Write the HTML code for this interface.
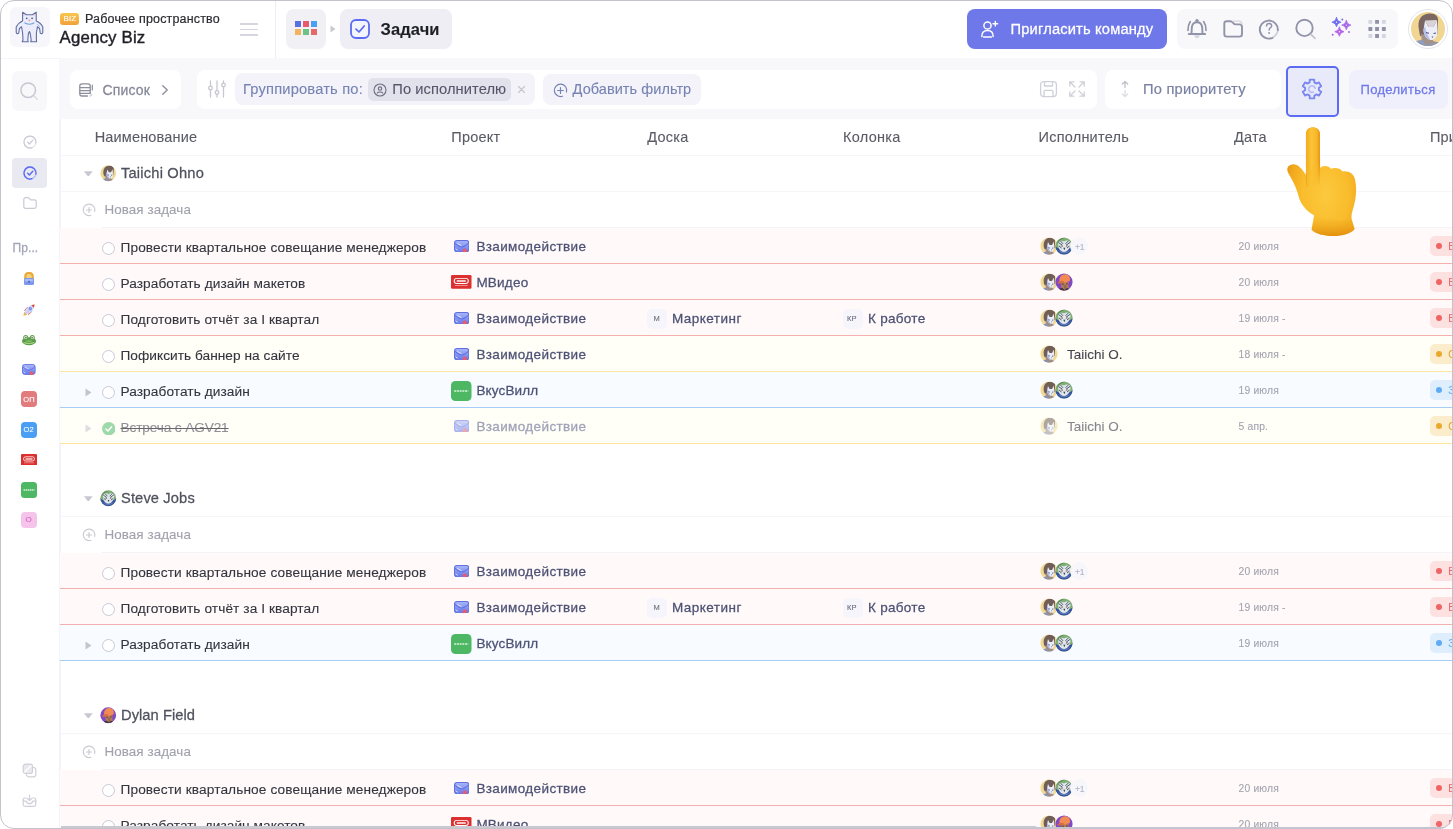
<!DOCTYPE html>
<html lang="ru">
<head>
<meta charset="utf-8">
<title>Задачи</title>
<style>
*{box-sizing:border-box;margin:0;padding:0}
html,body{width:1453px;height:829px;overflow:hidden;background:#fff}
body{font-family:"Liberation Sans",sans-serif;color:#33333d;-webkit-font-smoothing:antialiased}
#frame{will-change:transform;position:absolute;left:0;top:0;width:1453px;height:829px;border-radius:14px;overflow:hidden;background:#fff}
#frameborder{position:absolute;left:0;top:0;width:1453px;height:829px;border-radius:14px;border:1px solid #c4c3cd;pointer-events:none;z-index:100}
.abs{position:absolute}
.t{position:absolute;white-space:nowrap;line-height:1;-webkit-text-stroke:0.1px currentColor}
.med{-webkit-text-stroke:0.26px currentColor}
/* top bar */
#topbar{position:absolute;left:0;top:0;width:1453px;height:58px;background:#fff}
#content{position:absolute;left:0;top:58px;width:1453px;height:771px;background:#f8f8fb}
#sidebar{position:absolute;left:0;top:58px;width:59px;height:771px;background:#fff}
#table{position:absolute;left:59px;top:119px;width:1394px;height:710px;background:#fff;border-left:2px solid #f3f3f9}
.box{position:absolute;border-radius:8px}
</style>
</head>
<body>
<svg width="0" height="0" style="position:absolute"><defs>
<linearGradient id="eg" x1="0" x2="0" y1="0" y2="1"><stop offset="0" stop-color="#a9b7fa"/><stop offset="1" stop-color="#6679e8"/></linearGradient><g id="envl"><rect x="0.500" y="0.500" width="14" height="11" rx="2.500" fill="url(#eg)" stroke="#6070e2" stroke-width="1"/><path d="M0.800 3 C3 5 5.500 6.800 7.500 6.800 C9.500 6.800 12 5 14.200 3" fill="none" stroke="#6070e2" stroke-width="1" stroke-linejoin="round"/><path d="M3.500 3.500 L7 5.300" stroke="#e4e9ff" stroke-width="0.900" stroke-linecap="round"/><path d="M1.800 8.800 L3.300 9.800" stroke="#dfe5ff" stroke-width="0.900" stroke-linecap="round"/><circle cx="10.500" cy="10.300" r="2.100" fill="#e85a6c"/></g>
<g id="mvid"><rect width="16" height="11.500" rx="1" fill="#dc2f2f"/><rect x="2.500" y="2.800" width="11" height="4.200" rx="2.100" fill="none" stroke="#fff" stroke-width="0.800"/><path d="M4.500 5 L11.500 5" stroke="#fff" stroke-width="1.200"/><path d="M3 8.800 L13 8.800" stroke="#f3a0a0" stroke-width="0.700"/></g>
<g id="vkus"><rect width="16" height="16" rx="3.500" fill="#4db763"/><path d="M2.500 8 L13.500 8" stroke="#d5f2da" stroke-width="1.300" stroke-dasharray="1.600 0.500"/></g>
<clipPath id="c18"><circle cx="9" cy="9" r="8.600"/></clipPath>
<g id="avt"><g clip-path="url(#c18)"><rect width="18" height="18" fill="#f1d995"/>
<path d="M4 11 C2.800 5 5 1 10 0.800 C14 0.600 15.500 2.500 15 5.500 L14.500 11 L5 12.500 Z" fill="#6f5f58"/>
<path d="M5.500 11.500 L6 15 L2 17 L2 18 L16 18 L15 16 L12 15 L12 12 Z" fill="#9e8d86"/>
<path d="M1 18 L2.500 15.500 L6 14.500 L8.500 17.500 L13 16.500 L16 16 L17.500 18 Z" fill="#8494bd"/>
<path d="M8 5 L9.600 8 L12 8 L13.800 4.500 L14.200 10.500 C14.200 13.200 12.300 15 10.500 14.700 C8.300 14.200 7 12 7 9.500 Z" fill="#e9ecf7"/>
<path d="M7 9.500 C7 12 8.300 14.200 10.500 14.700 C9 12.500 8.200 10.500 7.800 7.500 Z" fill="#a9b6e6"/>
<path d="M8.400 10.700 L9.900 11.100 M12 11.200 L13.400 11" stroke="#454a6c" stroke-width="0.800" fill="none"/>
<path d="M10.800 12.600 L11.400 13.500 L11.900 12.600 Z" fill="#454a6c"/>
</g></g>
<g id="avs"><g clip-path="url(#c18)"><rect width="18" height="18" fill="#7fae74"/>
<path d="M0 9 C3 12 6 11.500 9 13.500 C12 11.500 15 12 18 9 L18 18 L0 18 Z" fill="#34519f"/>
<path d="M3.500 5.500 C4.500 3.500 7 3 9 4.500 C11 3 14 3.500 15.500 5 C16 8 14.500 12 12 14 C10 15.300 8 15.300 6 14 C3.500 12 2.800 8 3.500 5.500 Z" fill="#dfe7ea"/>
<path d="M3.500 5.500 L7.500 8.300 M15.500 5 L11 8.300 M5.500 4 L8 6.800 M13.500 3.800 L10.500 6.800 M4 9 L6.500 11 M14.500 9 L12 11" stroke="#3c4a5c" stroke-width="0.900" fill="none"/>
<path d="M5.800 8.800 L7.800 9.500 M12.800 8.600 L10.800 9.500" stroke="#8a3a3a" stroke-width="0.700"/>
<path d="M8.300 10.800 L9.300 13.200 L10.300 10.800 Z" fill="#34404f"/>
<path d="M2 6 C3 2.500 6 1 9 1 C7 2.500 4 3.500 2 6 Z" fill="#5d8a5a"/>
<path d="M4 13.500 C6 16.500 12 16.500 14.500 13.500" stroke="#6f88bd" stroke-width="1" fill="none"/>
</g></g>
<g id="avd"><g clip-path="url(#c18)"><rect width="18" height="18" fill="#8349c4"/>
<path d="M5.500 9 L6.500 15 L4 18 L15 18 L13.500 14 L13.500 8.500 Z" fill="#b17c5c"/>
<path d="M3 18 L4.500 15.500 L7.500 15 L9.500 17 L12 15 L15 16 L16 18 Z" fill="#3c3550"/>
<path d="M4.500 8.500 C4 4 6.500 1.200 10 1.200 C13.500 1.200 15.500 3.500 15 7 C14.800 8.300 14 8.800 13 8.500 L9.500 9.800 L3 10.300 C2.300 10.200 2.500 9.300 4.500 8.500 Z" fill="#f28a55"/>
<path d="M4.500 8.500 C6 7 9 7.500 9.500 9.800 L3 10.300 C2.300 10.200 2.500 9.300 4.500 8.500 Z" fill="#d96c3c"/>
<path d="M6.500 11 L9 11.300 M11 11 L13 10.800" stroke="#4a3028" stroke-width="0.700"/>
<path d="M9 12 C8.500 14 9 16 10 17 C11 16 11.500 14 11 12" fill="#8c5c44" opacity="0.700"/>
</g></g>
</defs></svg>
<div id="frame">
<div id="content"></div>
<div id="topbar">
<div class="box" style="left:10px;top:7px;width:40px;height:40px;border-radius:6px;background:#f7f7fb"></div>
<svg class="abs" style="left:10px;top:7px" width="40" height="40" viewBox="0 0 40 40">
<path d="M12.600 14 L12.600 5.200 L16.400 7.700 L22.400 7.700 L26.200 5.200 L26.200 14 C29 15 31.500 17.500 32.800 20 L32.800 25.300 C32.800 26.800 31 27 30.200 26 L29.600 21.500 L27.400 19.800 L26.400 26 L26.400 33 L26.600 34.800 L20.600 34.800 L21.200 33 L20.200 26.500 L19.400 24.500 L18.400 26.500 L17.800 33 L18.200 34.800 L12.200 34.800 L13 33 L12.600 26 L11.600 19.800 L9.400 21.500 L8.800 26 C8 27 6.200 26.800 6.200 25.300 L6.200 20 C7.500 17.500 10 15 12.600 14 Z" fill="#ececfb" stroke="#5f6ea2" stroke-width="1.100" stroke-linejoin="round"/>
<path d="M14.500 15.600 C16.500 17.800 22.300 17.800 24.300 15.600" fill="none" stroke="#6b9fdb" stroke-width="1.100"/>
<path d="M13.500 8.800 L13.500 6.800 L15.300 8.200 Z M25.300 8.800 L25.300 6.800 L23.500 8.200 Z" fill="#f5b5bd"/>
<circle cx="16.700" cy="11.300" r="0.850" fill="#4c5784"/><circle cx="22.100" cy="11.300" r="0.850" fill="#4c5784"/>
<path d="M18.200 12.800 L20.600 12.800 L19.400 14.500 Z" fill="#f0878f"/>
<path d="M27.500 17 L29.500 19.500" stroke="#8ba5e0" stroke-width="0.800"/>
</svg>
<div class="abs" style="left:60.200px;top:12.600px;width:18.700px;height:12px;border-radius:3px;background:linear-gradient(#f8c850,#f0a138)"></div>
<div class="t" style="left:63.600px;top:14.700px;font-size:8px;color:#fff;letter-spacing:0.1px">BIZ</div>
<div class="t" style="left:85px;top:13.300px;font-size:12.500px;letter-spacing:0.17px;color:#2b2b33;-webkit-text-stroke:0.2px currentColor">Рабочее пространство</div>
<div class="t" style="left:59.500px;top:29.800px;font-size:16.800px;letter-spacing:0.2px;color:#1e1e26;-webkit-text-stroke:0.4px currentColor">Agency Biz</div>
<div class="abs" style="left:240px;top:23px;width:18px;height:1.6px;background:#d6d6de"></div>
<div class="abs" style="left:240px;top:28.7px;width:18px;height:1.6px;background:#d6d6de"></div>
<div class="abs" style="left:240px;top:34.4px;width:18px;height:1.6px;background:#d6d6de"></div>
<div class="abs" style="left:275px;top:0;width:1px;height:58px;background:#ededf3"></div>
<div class="box" style="left:286px;top:9px;width:40px;height:40px;background:#f0f0f5"></div>
<div class="abs" style="left:295px;top:21px;width:6px;height:6px;background:#5b70e0"></div>
<div class="abs" style="left:303px;top:21px;width:6px;height:6px;background:#e9586c"></div>
<div class="abs" style="left:311px;top:21px;width:6px;height:6px;background:#4a9ff2"></div>
<div class="abs" style="left:295px;top:29px;width:6px;height:6px;background:#f2b35f"></div>
<div class="abs" style="left:303px;top:29px;width:6px;height:6px;background:#6cc283"></div>
<div class="abs" style="left:311px;top:29px;width:6px;height:6px;background:#e2686a"></div>
<svg class="abs" style="left:330px;top:25px" width="6" height="8" viewBox="0 0 6 8"><path d="M0.5 0.5 L5.5 4 L0.5 7.5 Z" fill="#c9c9d2"/></svg>
<div class="box" style="left:340px;top:9px;width:112px;height:40px;background:#eeeef4"></div>
<svg class="abs" style="left:349px;top:18px" width="22" height="22" viewBox="0 0 22 22"><rect x="2" y="2" width="18" height="18" rx="5" fill="#f4f4fd" stroke="#5c6bf0" stroke-width="1.8"/><path d="M7 11.2 L10 14 L15.2 8" fill="none" stroke="#5c6bf0" stroke-width="1.7" stroke-linecap="round" stroke-linejoin="round"/></svg>
<div class="t" style="left:380.5px;top:21px;font-size:16.5px;font-weight:700;letter-spacing:0.1px;color:#1e1e26">Задачи</div>
<div class="box" style="left:967px;top:9px;width:200px;height:40px;background:#6e78e8"></div>
<svg class="abs" style="left:980px;top:19px" width="20" height="20" viewBox="0 0 20 20" fill="none" stroke="#fff" stroke-width="1.5" stroke-linecap="round"><circle cx="7.5" cy="6.5" r="3.6"/><path d="M1.8 17.5 C1.8 13.5 4 11.6 7.5 11.6 C11 11.6 13.2 13.5 13.2 17.5 M3.5 18 L11.5 18"/><path d="M15.3 2.5 L15.3 7.1 M13 4.8 L17.6 4.8" stroke-width="1.4"/></svg>
<div class="t med" style="left:1010.5px;top:21.600px;font-size:14.700px;letter-spacing:0.17px;color:#fff">Пригласить команду</div>
<div class="box" style="left:1177px;top:9px;width:221px;height:40px;background:#f8f8fb"></div>
<svg class="abs" style="left:1177px;top:9px" width="221" height="40" viewBox="1177 9 221 40" fill="none" stroke="#9194a9" stroke-width="1.9" stroke-linecap="round" stroke-linejoin="round">
<path d="M1188.800 34 L1205.200 34 M1191.400 33.800 C1191.800 31 1191.600 29 1191.900 27 C1192.300 23.800 1194.300 22.200 1197 22.200 C1199.700 22.200 1201.700 23.800 1202.100 27 C1202.400 29 1202.200 31 1202.600 33.800"/>
<circle cx="1197" cy="20.600" r="1.700" fill="#9194a9" stroke="none"/>
<path d="M1194.200 35.300 C1194.800 39.300 1199.200 39.300 1199.800 35.300 Z" fill="#d3d5e0" stroke="none"/>
<path d="M1190.300 21.600 C1188.600 24 1188 27 1188 30.300 M1203.700 21.600 C1205.400 24 1206 27 1206 30.300" stroke-width="1.700"/>
<path d="M1224.300 23.500 C1224.300 22 1225.300 21.200 1226.800 21.200 L1230.500 21.200 C1231.500 21.200 1232 21.600 1232.700 22.400 L1233.700 23.600 C1234.200 24.200 1234.800 24.400 1235.600 24.400 L1239.500 24.400 C1241.200 24.400 1242 25.300 1242 27 L1242 34 C1242 35.700 1241.200 36.600 1239.500 36.600 L1226.800 36.600 C1225.200 36.600 1224.300 35.700 1224.300 34 Z"/>
<path d="M1233 21.200 L1239 21.200 C1240.800 21.200 1241.800 22.200 1242 24" stroke="#d5d6de" stroke-width="1.2"/>
<path d="M1272.500 37.800 A9 9 0 1 1 1277.800 30.500"/>
<path d="M1277.500 31.800 A9 9 0 0 1 1273.800 36.900" stroke="#d0d1da"/>
<path d="M1266.500 26 C1266.500 24.300 1267.600 23.400 1269.100 23.400 C1270.600 23.400 1271.700 24.300 1271.700 25.700 C1271.700 27.700 1269.100 27.700 1269.100 30" stroke-width="1.5"/>
<circle cx="1269.100" cy="33" r="0.95" fill="#9194a9" stroke="none"/>
<circle cx="1304.500" cy="27.900" r="8.200"/>
<path d="M1311 34.500 L1315 38.300" stroke="#c5c6d0" stroke-width="1.8"/>
<g fill="#8f92a7" stroke="none"><rect x="1375.1" y="19.9" width="3.900" height="3.900" rx="0.400"/><rect x="1368.4" y="27.0" width="3.900" height="3.900" rx="0.400"/><rect x="1375.1" y="27.0" width="3.900" height="3.900" rx="0.400"/><rect x="1381.9" y="27.0" width="3.900" height="3.900" rx="0.400"/><rect x="1375.1" y="34.0" width="3.900" height="3.900" rx="0.400"/></g><g fill="#d3d5e0" stroke="none"><rect x="1368.4" y="19.9" width="3.900" height="3.900" rx="0.400"/><rect x="1381.9" y="19.9" width="3.900" height="3.900" rx="0.400"/><rect x="1368.4" y="34.0" width="3.900" height="3.900" rx="0.400"/><rect x="1381.9" y="34.0" width="3.900" height="3.900" rx="0.400"/></g>
<g stroke="none"><path d="M1336.5 17.6 Q1337.05 21.65 1341.1 22.2 Q1337.05 22.75 1336.5 26.799999999999997 Q1335.95 22.75 1331.9 22.2 Q1335.95 21.65 1336.5 17.6 Z" fill="#6d69ee" stroke="#6d69ee" stroke-width="0.8" stroke-linejoin="round"/><circle cx="1336.5" cy="22.2" r="0.7" fill="#f8f8fb"/><path d="M1346.3 20.5 Q1346.85 24.55 1350.8999999999999 25.1 Q1346.85 25.650000000000002 1346.3 29.700000000000003 Q1345.75 25.650000000000002 1341.7 25.1 Q1345.75 24.55 1346.3 20.5 Z" fill="#a361e9" stroke="#a361e9" stroke-width="0.8" stroke-linejoin="round"/><circle cx="1346.3" cy="25.1" r="0.7" fill="#f8f8fb"/><path d="M1339.4 27.1 Q1339.95 31.15 1344.0 31.7 Q1339.95 32.25 1339.4 36.3 Q1338.8500000000001 32.25 1334.8000000000002 31.7 Q1338.8500000000001 31.15 1339.4 27.1 Z" fill="#b460e8" stroke="#b460e8" stroke-width="0.8" stroke-linejoin="round"/><circle cx="1339.4" cy="31.7" r="0.7" fill="#f8f8fb"/><circle cx="1342.300" cy="19.400" r="1" fill="#6d69ee"/><circle cx="1349" cy="31.900" r="1" fill="#b460e8"/><circle cx="1332.700" cy="34.800" r="1" fill="#a860e8"/></g>
</svg>
<div class="abs" style="left:1408px;top:9px;width:40px;height:40px;border-radius:50%;border:1px solid #e3e3ef;background:#fff"></div>
<svg class="abs" style="left:1411px;top:12px" width="34" height="34" viewBox="0 0 34 34">
<defs><clipPath id="avc"><circle cx="17" cy="17" r="17"/></clipPath></defs>
<g clip-path="url(#avc)"><rect width="34" height="34" fill="#f1d692"/>
<path d="M8 18 C6 8 10 2 18 1.5 C24 1 28 4 27 10 L26.5 22 L9 24 Z" fill="#7a6763"/>
<path d="M10 22 L11 30 L4 33 L4 34 L30 34 L30 31 L22 29 L22 24 Z" fill="#a49189"/>
<path d="M2 34 L4 29.5 L11 27.5 L15 33 L24 31 L30 30 L33 34 Z" fill="#8e9cbd"/>
<path d="M14 8.5 L17.5 15 L22.5 15 L26 8 L26.5 20 C26.5 25 23 28.5 19.5 28 C15.5 27 12.5 23 12.5 18 Z" fill="#eceef8"/>
<path d="M14 8.5 L26 8 L22.5 15 L17.5 15 Z" fill="#d9d3d8"/>
<path d="M12.500 18 C12.500 23 15.500 27 19.500 28 C17 24 15 20 14 14 Z" fill="#b5c0ea"/>
<path d="M15 20.500 L18 21.300 M22.500 21.500 L25 21" stroke="#4a4f70" stroke-width="1" fill="none"/>
<path d="M20.500 24.500 L21.500 26 L22.300 24.500 Z" fill="#4a4f70"/>
</g></svg>
</div>
<div id="toolbar">
<div class="box" style="left:70px;top:70px;width:111px;height:39px;background:#fff"></div>
<svg class="abs" style="left:78px;top:82px" width="16" height="16" viewBox="0 0 16 16" fill="none" stroke="#8d8f9f" stroke-width="1.3" stroke-linecap="round" stroke-linejoin="round"><path d="M9.500 14 L4 14 C2.600 14 1.800 13.200 1.800 11.800 L1.800 4 C1.800 2.600 2.600 1.800 4 1.800 L10 1.800 C11.400 1.800 12.200 2.600 12.200 4 L12.200 11.500"/><path d="M1.800 5.600 L12.200 5.600 M1.800 8.600 L12.200 8.600 M1.800 11.400 L12.200 11.400" stroke-width="1.100"/><path d="M14.300 3 L14.300 8" stroke-width="1.200"/><path d="M13.800 12.500 C13.500 13.500 12.800 14 11.800 14" stroke="#cfd0d9"/></svg>
<div class="t med" style="left:102.500px;top:82.700px;font-size:14px;letter-spacing:0.16px;color:#878899">Список</div>
<svg class="abs" style="left:161px;top:84px" width="8" height="12" viewBox="0 0 8 12" fill="none" stroke="#8d8f9f" stroke-width="1.400" stroke-linecap="round" stroke-linejoin="round"><path d="M1.800 1.800 L6.200 6 L1.800 10.200"/></svg>
<div class="box" style="left:197px;top:70px;width:900px;height:39px;background:#fff"></div>
<svg class="abs" style="left:207px;top:80px" width="20" height="18" viewBox="0 0 20 18" fill="none" stroke="#c6c7d1" stroke-width="1.300" stroke-linecap="round"><path d="M3.500 1 L3.500 6 M3.500 10 L3.500 17 M10 1 L10 10.500 M10 14.500 L10 17 M16.500 1 L16.500 3 M16.500 7 L16.500 17"/><circle cx="3.500" cy="8" r="1.800"/><circle cx="10" cy="12.500" r="1.800"/><circle cx="16.500" cy="5" r="1.800"/></svg>
<div class="box" style="left:235px;top:73px;width:300px;height:32px;background:#f3f3f9"></div>
<div class="t" style="left:243px;top:81.600px;font-size:14.700px;letter-spacing:0.18px;color:#7683b3">Группировать по:</div>
<div class="box" style="left:368px;top:77.500px;width:143px;height:23.500px;border-radius:5px;background:#e2e2ec"></div>
<svg class="abs" style="left:372.500px;top:82.500px" width="14" height="14" viewBox="0 0 14 14" fill="none" stroke="#6d6f82" stroke-width="1.100" stroke-linecap="round"><circle cx="7" cy="7" r="6"/><circle cx="7" cy="5.600" r="1.700"/><path d="M4.300 10 C5 8.700 9 8.700 9.700 10"/></svg>
<div class="t" style="left:392.300px;top:81.600px;font-size:14.700px;letter-spacing:0.07px;color:#55566a">По исполнителю</div>
<svg class="abs" style="left:517px;top:85px" width="9" height="9" viewBox="0 0 9 9" stroke="#c3c4ce" stroke-width="1.100" stroke-linecap="round"><path d="M1.500 1.500 L7.500 7.500 M7.500 1.500 L1.500 7.500"/></svg>
<div class="box" style="left:543px;top:73.500px;width:158px;height:31.500px;background:#f3f3f9"></div>
<svg class="abs" style="left:553px;top:82.500px" width="15" height="15" viewBox="0 0 15 15" fill="none" stroke="#7683b3" stroke-width="1.200" stroke-linecap="round"><path d="M9.500 13.200 A6.200 6.200 0 1 1 13.500 9"/><path d="M7.500 4.600 L7.500 10.400 M4.600 7.500 L10.400 7.500"/></svg>
<div class="t" style="left:572.600px;top:81.700px;font-size:14.500px;letter-spacing:0.06px;color:#7683b3">Добавить фильтр</div>
<svg class="abs" style="left:1039px;top:80px" width="19" height="18" viewBox="0 0 19 18" fill="none" stroke="#cfd0d9" stroke-width="1.300" stroke-linejoin="round"><rect x="1.600" y="1.600" width="15.800" height="15" rx="3"/><path d="M5.500 1.600 L5.500 6 L13.500 6 L13.500 1.600 M5 16.600 L5 11.500 C5 10.800 5.400 10.400 6.100 10.400 L12.900 10.400 C13.600 10.400 14 10.800 14 11.500 L14 16.600"/></svg>
<svg class="abs" style="left:1068px;top:80px" width="18" height="18" viewBox="0 0 18 18" fill="none" stroke="#cfd0d9" stroke-width="1.300" stroke-linecap="round" stroke-linejoin="round"><path d="M1.800 6 L1.800 1.800 L6 1.800 M1.800 1.800 L7 7 M12 1.800 L16.200 1.800 L16.200 6 M16.200 1.800 L11 7 M1.800 12 L1.800 16.200 L6 16.200 M1.800 16.200 L7 11 M12 16.200 L16.200 16.200 L16.200 12 M16.200 16.200 L11 11"/></svg>
<div class="box" style="left:1105px;top:70px;width:176px;height:39px;background:#fff"></div>
<svg class="abs" style="left:1119px;top:80px" width="12" height="18" viewBox="0 0 12 18" fill="none" stroke-width="1.300" stroke-linecap="round" stroke-linejoin="round"><path d="M6 7.500 L6 1.500 M3.300 4 L6 1.500 L8.700 4" stroke="#bfc0cb"/><path d="M6 10.500 L6 16.500 M3.300 14 L6 16.500 L8.700 14" stroke="#dcdde4"/></svg>
<div class="t" style="left:1143px;top:81.600px;font-size:14.700px;letter-spacing:0.2px;color:#7a80a3;-webkit-text-stroke:0.18px currentColor">По приоритету</div>
<div class="abs" style="left:1286px;top:66px;width:53px;height:51px;border:2px solid #5c6cf2;border-radius:5px;background:#e8eafa"></div>
<svg class="abs" style="left:1300.400px;top:77.100px" width="24" height="24" viewBox="0 0 24 24" fill="none" stroke="#7b87f1" stroke-width="1.900" stroke-linejoin="round" stroke-linecap="round"><path d="M14.39 5.42 L14.24 2.67 L9.76 2.67 L9.61 5.42 L7.50 6.64 L5.04 5.39 L2.80 9.27 L5.11 10.78 L5.11 13.22 L2.80 14.73 L5.04 18.61 L7.50 17.36 L9.61 18.58 L9.76 21.33 L14.24 21.33 L14.39 18.58 L16.50 17.36 L18.96 18.61 L21.20 14.73 L18.89 13.22 L18.89 10.78 L21.20 9.27 L18.96 5.39 L16.50 6.64 Z"/><path d="M13.5 15 A3.300 3.300 0 1 1 15.200 11.300" stroke="#b3baf6" stroke-width="1.600"/></svg>
<div class="box" style="left:1348.500px;top:69.500px;width:99.500px;height:39.500px;background:#f0f0fd"></div>
<div class="t med" style="left:1360.500px;top:83px;font-size:13px;letter-spacing:0.32px;color:#6e79e8">Поделиться</div>
</div>
<div id="sidebar">
<div class="abs" style="left:0;top:-0.500px;width:60px;height:1.600px;background:#f4f4f9"></div><div class="box" style="left:12px;top:13px;width:35px;height:40px;border-radius:6px;background:#f8f8fb"></div>
<svg class="abs" style="left:19px;top:22px" width="22" height="22" viewBox="0 0 22 22" fill="none" stroke-linecap="round"><circle cx="9.200" cy="10.200" r="7.300" stroke="#c6c7d1" stroke-width="1.500"/><path d="M15 16 L18.300 19.300" stroke="#dcdde5" stroke-width="1.600"/></svg>
<svg class="abs" style="left:21.500px;top:76.400px" width="16" height="16" viewBox="0 0 16 16" fill="none" stroke="#c9cad4" stroke-width="1.200" stroke-linecap="round" stroke-linejoin="round"><circle cx="8" cy="8" r="6" stroke="#e6e7ed"/><path d="M10 13.700 A6 6 0 1 1 13.900 9"/><path d="M5.600 8.200 L7.400 10 L10.800 6.200"/></svg>
<div class="abs" style="left:12px;top:99.600px;width:35px;height:30.200px;border-radius:4px;background:#e9e9f1"></div>
<svg class="abs" style="left:21.500px;top:106.700px" width="16" height="16" viewBox="0 0 16 16" fill="none" stroke="#5c6bf0" stroke-width="1.400" stroke-linecap="round" stroke-linejoin="round"><circle cx="8" cy="8" r="6" stroke="#b9c0f6"/><path d="M10 13.700 A6 6 0 1 1 13.900 9"/><path d="M5.600 8.200 L7.400 10 L10.800 6.200"/></svg>
<svg class="abs" style="left:21.500px;top:137.500px" width="16" height="14" viewBox="0 0 16 14" fill="none" stroke="#c9cad4" stroke-width="1.200" stroke-linejoin="round"><path d="M1.800 3.500 C1.800 2.300 2.500 1.700 3.600 1.700 L6 1.700 C6.700 1.700 7.100 2 7.500 2.500 L8.200 3.300 C8.500 3.700 8.900 3.900 9.500 3.900 L12.400 3.900 C13.600 3.900 14.200 4.500 14.200 5.700 L14.200 10.500 C14.200 11.700 13.600 12.300 12.400 12.300 L3.600 12.300 C2.400 12.300 1.800 11.700 1.800 10.500 Z"/></svg>
<div class="t med" style="left:12.500px;top:183.500px;font-size:12px;letter-spacing:0.1px;color:#a3a5b8">Пр...</div>
<!-- lock -->
<svg class="abs" style="left:22px;top:214px" width="14" height="14" viewBox="0 0 14 14"><path d="M3.300 7 L3.300 4.500 C3.300 2.300 4.800 1 7 1 C9.200 1 10.700 2.300 10.700 4.500 L10.700 7" fill="#f6d27a" stroke="#e8a93a" stroke-width="2.200"/><rect x="2" y="6" width="10" height="7" rx="1.500" fill="#7d97ee"/><rect x="3" y="7" width="8" height="2.500" rx="1" fill="#a9bdf7"/><circle cx="7" cy="9.800" r="1" fill="#4a60c0"/></svg>
<!-- rocket -->
<svg class="abs" style="left:22px;top:244.500px" width="14" height="14" viewBox="0 0 14 14"><path d="M1.300 12.700 L2.300 8.800 L5.200 11.700 Z" fill="#f2b13c"/><path d="M1.800 7.800 L5.500 3.800 L7 7 Z M6.200 12.200 L10.200 8.500 L7 7 Z" fill="#e0483c"/><path d="M3.200 10.800 C2 7 5.500 2 12.500 1.500 C12 8.500 7 12 3.200 10.800 Z" fill="#d3d9f8"/><path d="M9.300 2.200 C10.500 1.700 11.500 1.500 12.500 1.500 C12.500 2.500 12.300 3.500 11.800 4.700 Z" fill="#e0483c"/><circle cx="8.300" cy="5.700" r="1.700" fill="#6f86e8"/><path d="M3.200 10.800 C5 10 8 7 9.500 4" stroke="#aab4ee" stroke-width="0.700" fill="none"/></svg>
<!-- frog -->
<svg class="abs" style="left:21px;top:275.500px" width="16" height="12" viewBox="0 0 16 12"><ellipse cx="8" cy="7.200" rx="7" ry="4" fill="#5aa046"/><circle cx="4.700" cy="3.500" r="2.500" fill="#5aa046"/><circle cx="11.300" cy="3.500" r="2.500" fill="#5aa046"/><circle cx="4.700" cy="3.500" r="1.500" fill="#f2f4ee"/><circle cx="11.300" cy="3.500" r="1.500" fill="#f2f4ee"/><circle cx="4.900" cy="3.700" r="0.700" fill="#333"/><circle cx="11.100" cy="3.700" r="0.700" fill="#333"/><ellipse cx="8" cy="8.200" rx="5.500" ry="1.800" fill="#9ed27c"/><path d="M3 7.300 C5 8.500 11 8.500 13 7.300" stroke="#2f6a2a" stroke-width="0.700" fill="none"/></svg>
<!-- envelope -->
<svg class="abs" style="left:22px;top:305.800px" width="13.600" height="11.400" viewBox="0 0 15 12.600"><use href="#envl"/></svg>
<div class="abs" style="left:20.600px;top:333.200px;width:16px;height:16px;border-radius:4px;background:#e27c7c"></div>
<div class="t" style="left:23.200px;top:337.700px;font-size:7.500px;color:#fff;letter-spacing:0.2px">ОП</div>
<div class="abs" style="left:20.600px;top:363.500px;width:16px;height:16px;border-radius:4px;background:#4a9ff5"></div>
<div class="t" style="left:23.400px;top:368px;font-size:7.500px;color:#fff;letter-spacing:0.2px">О2</div>
<svg class="abs" style="left:20.600px;top:395.700px" width="16" height="11.500" viewBox="0 0 16 11.500"><use href="#mvid"/></svg>
<svg class="abs" style="left:20.600px;top:423.800px" width="16" height="16" viewBox="0 0 16 16"><use href="#vkus"/></svg>
<div class="abs" style="left:20.600px;top:453.700px;width:16px;height:16px;border-radius:4px;background:#f6c3ea"></div>
<div class="t" style="left:25.600px;top:458px;font-size:8px;color:#d263c3">О</div>
<svg class="abs" style="left:22px;top:705px" width="15" height="15" viewBox="0 0 15 15" fill="none" stroke="#cfd0d9" stroke-width="1.200" stroke-linejoin="round"><rect x="4.500" y="4.500" width="9.300" height="9.300" rx="2.200"/><rect x="1.200" y="1.200" width="9.300" height="9.300" rx="2.200" fill="#e9e9ef"/><path d="M2.500 9.300 L9.300 2.500" stroke="#fff" stroke-width="1.300"/></svg>
<svg class="abs" style="left:22px;top:736px" width="15" height="14" viewBox="0 0 15 14" fill="none" stroke="#cfd0d9" stroke-width="1.200" stroke-linejoin="round" stroke-linecap="round"><path d="M4.200 4 L3 4 C1.800 4 1.200 4.600 1.200 5.800 L1.200 10.500 C1.200 11.700 1.800 12.300 3 12.300 L12 12.300 C13.200 12.300 13.800 11.700 13.800 10.500 L13.800 5.800 C13.800 4.600 13.200 4 12 4 L10.800 4"/><path d="M1.200 7.200 L4.300 7.200 C4.800 8.800 5.800 9.600 7.500 9.600 C9.200 9.600 10.200 8.800 10.700 7.200 L13.800 7.200"/><path d="M7.500 1 L7.500 6.500 M5.300 4.500 L7.500 6.700 L9.700 4.500"/></svg>
</div>
<div id="table"></div>
<div id="rows">
<div class="t " style="left:94.7px;top:127.1px;height:20px;line-height:20px;font-size:14.5px;letter-spacing:0.15999999999999998px;color:#5a5b65;">Наименование</div><div class="t " style="left:451.3px;top:127.1px;height:20px;line-height:20px;font-size:14.5px;letter-spacing:0.23000000000000004px;color:#5a5b65;">Проект</div><div class="t " style="left:647.3px;top:127.1px;height:20px;line-height:20px;font-size:14.5px;letter-spacing:0.22000000000000003px;color:#5a5b65;">Доска</div><div class="t " style="left:843px;top:127.1px;height:20px;line-height:20px;font-size:14.5px;letter-spacing:0.27999999999999997px;color:#5a5b65;">Колонка</div><div class="t " style="left:1038.5px;top:127.1px;height:20px;line-height:20px;font-size:14.5px;letter-spacing:0.23000000000000004px;color:#5a5b65;">Исполнитель</div><div class="t " style="left:1234px;top:127.1px;height:20px;line-height:20px;font-size:14.5px;letter-spacing:0.16999999999999998px;color:#5a5b65;">Дата</div><div class="t " style="left:1430px;top:127.1px;height:20px;line-height:20px;font-size:14.5px;letter-spacing:0.16999999999999998px;color:#5a5b65;">Приоритет</div><div class="abs" style="left:60px;top:155px;width:1393px;height:1px;background:#f6f6fa"></div><svg class="abs" style="left:84px;top:170.7px" width="8.600" height="5.800" viewBox="0 0 8.600 5.800"><path d="M0.400 0.400 L8.200 0.400 L4.300 5.500 Z" fill="#c6c7d0" stroke="#c6c7d0" stroke-width="0.500" stroke-linejoin="round"/></svg><svg class="abs" style="left:100px;top:165px;opacity:1" width="16.5" height="16.5" viewBox="0 0 18 18"><use href="#avt"/></svg><div class="t med" style="left:121px;top:163.4px;height:20px;line-height:20px;font-size:14.7px;letter-spacing:0.18px;color:#50515e;">Taiichi Ohno</div><div class="abs" style="left:60px;top:191px;width:1393px;height:1px;background:#f6f6fa"></div><svg class="abs" style="left:82.300px;top:202.9px" width="14" height="14" viewBox="0 0 15 15" fill="none" stroke="#c9cad4" stroke-width="1.250" stroke-linecap="round"><path d="M9.500 13.200 A6.200 6.200 0 1 1 13.500 9"/><path d="M7.500 4.800 L7.500 10.200 M4.800 7.500 L10.200 7.500"/></svg><div class="t " style="left:104.5px;top:200.1px;height:20px;line-height:20px;font-size:13.4px;letter-spacing:0.08px;color:#a0a1ac;">Новая задача</div><div class="abs" style="left:102px;top:227px;width:1351px;height:1px;background:#f4f4f8"></div><div class="abs" style="left:60px;top:228px;width:1393px;height:36px;background:#fffaf9"></div><div class="abs" style="left:60px;top:263.1px;width:1393px;height:1.2px;background:#f5b0b0;z-index:2"></div><div class="abs" style="left:101.700px;top:241.7px;width:13px;height:13px;border-radius:50%;border:1.400px solid #c9cad7;background:#fff"></div><div class="t " style="left:120.5px;top:238.2px;height:20px;line-height:20px;font-size:13.7px;letter-spacing:0.1px;color:#33343e;">Провести квартальное совещание менеджеров</div><svg class="abs" style="left:453.800px;top:239.6px;" width="15.400" height="12.900" viewBox="0 0 15 12.600"><use href="#envl"/></svg><div class="t med" style="left:476.4px;top:236.7px;height:20px;line-height:20px;font-size:13.5px;letter-spacing:0.37px;color:#4d5275;">Взаимодействие</div><svg class="abs" style="left:1040px;top:237px;opacity:1" width="18" height="18" viewBox="0 0 18 18"><use href="#avt"/></svg><svg class="abs" style="left:1055px;top:237px;opacity:1" width="18" height="18" viewBox="0 0 18 18"><use href="#avs"/></svg><div class="abs" style="left:1070.400px;top:237px;width:18px;height:18px;border-radius:50%;background:#f6f6fb"></div><div class="t " style="left:1075px;top:236.7px;height:20px;line-height:20px;font-size:8.5px;letter-spacing:-0.3px;color:#b0b2c4;">+1</div><div class="t " style="left:1238.5px;top:236.9px;height:20px;line-height:20px;font-size:10.3px;letter-spacing:0.2px;color:#a3a4af;">20 июля</div><div class="abs" style="left:1429.600px;top:236.4px;width:60px;height:19.300px;border-radius:5px;background:#fde1e0"></div><div class="abs" style="left:1436px;top:243.1px;width:6px;height:6px;border-radius:50%;background:#ef6464"></div><div class="t " style="left:1448.2px;top:236.7px;height:20px;line-height:20px;font-size:10px;letter-spacing:0px;color:#ec6a6a;">В</div><div class="abs" style="left:60px;top:264px;width:1393px;height:36px;background:#fffaf9"></div><div class="abs" style="left:60px;top:299.1px;width:1393px;height:1.2px;background:#f5b0b0;z-index:2"></div><div class="abs" style="left:101.700px;top:277.7px;width:13px;height:13px;border-radius:50%;border:1.400px solid #c9cad7;background:#fff"></div><div class="t " style="left:120.5px;top:274.2px;height:20px;line-height:20px;font-size:13.7px;letter-spacing:0.06px;color:#33343e;">Разработать дизайн макетов</div><svg class="abs" style="left:451.400px;top:275.4px" width="20.500" height="13.800" viewBox="0 0 16 11.500" preserveAspectRatio="none"><use href="#mvid"/></svg><div class="t med" style="left:476.4px;top:272.7px;height:20px;line-height:20px;font-size:13.5px;letter-spacing:0.22px;color:#4d5275;">МВидео</div><svg class="abs" style="left:1040px;top:273px;opacity:1" width="18" height="18" viewBox="0 0 18 18"><use href="#avt"/></svg><svg class="abs" style="left:1055px;top:273px;opacity:1" width="18" height="18" viewBox="0 0 18 18"><use href="#avd"/></svg><div class="t " style="left:1238.5px;top:272.9px;height:20px;line-height:20px;font-size:10.3px;letter-spacing:0.2px;color:#a3a4af;">20 июля</div><div class="abs" style="left:1429.600px;top:272.4px;width:60px;height:19.300px;border-radius:5px;background:#fde1e0"></div><div class="abs" style="left:1436px;top:279.1px;width:6px;height:6px;border-radius:50%;background:#ef6464"></div><div class="t " style="left:1448.2px;top:272.7px;height:20px;line-height:20px;font-size:10px;letter-spacing:0px;color:#ec6a6a;">В</div><div class="abs" style="left:60px;top:300px;width:1393px;height:36px;background:#fffaf9"></div><div class="abs" style="left:60px;top:335.1px;width:1393px;height:1.2px;background:#f5b0b0;z-index:2"></div><div class="abs" style="left:101.700px;top:313.7px;width:13px;height:13px;border-radius:50%;border:1.400px solid #c9cad7;background:#fff"></div><div class="t " style="left:120.5px;top:310.2px;height:20px;line-height:20px;font-size:13.7px;letter-spacing:0.07999999999999999px;color:#33343e;">Подготовить отчёт за I квартал</div><svg class="abs" style="left:453.800px;top:311.6px;" width="15.400" height="12.900" viewBox="0 0 15 12.600"><use href="#envl"/></svg><div class="t med" style="left:476.4px;top:308.7px;height:20px;line-height:20px;font-size:13.5px;letter-spacing:0.37px;color:#4d5275;">Взаимодействие</div><div class="abs" style="left:647.3px;top:308.5px;width:20px;height:20px;border-radius:5px;background:#f5f5fb"></div><div class="t " style="left:653.5999999999999px;top:309.0px;height:20px;line-height:20px;font-size:7.5px;letter-spacing:0.2px;color:#6c6e80;">М</div><div class="t med" style="left:671.9px;top:308.7px;height:20px;line-height:20px;font-size:13.5px;letter-spacing:0.48px;color:#4d5275;">Маркетинг</div><div class="abs" style="left:843.3px;top:308.5px;width:20px;height:20px;border-radius:5px;background:#f5f5fb"></div><div class="t " style="left:846.8999999999999px;top:309.0px;height:20px;line-height:20px;font-size:7.5px;letter-spacing:0.2px;color:#6c6e80;">КР</div><div class="t med" style="left:867.9px;top:308.7px;height:20px;line-height:20px;font-size:13.5px;letter-spacing:0.31px;color:#4d5275;">К работе</div><svg class="abs" style="left:1040px;top:309px;opacity:1" width="18" height="18" viewBox="0 0 18 18"><use href="#avt"/></svg><svg class="abs" style="left:1055px;top:309px;opacity:1" width="18" height="18" viewBox="0 0 18 18"><use href="#avs"/></svg><div class="t " style="left:1238.5px;top:308.9px;height:20px;line-height:20px;font-size:10.3px;letter-spacing:0.2px;color:#a3a4af;">19 июля -</div><div class="abs" style="left:1429.600px;top:308.4px;width:60px;height:19.300px;border-radius:5px;background:#fde1e0"></div><div class="abs" style="left:1436px;top:315.1px;width:6px;height:6px;border-radius:50%;background:#ef6464"></div><div class="t " style="left:1448.2px;top:308.7px;height:20px;line-height:20px;font-size:10px;letter-spacing:0px;color:#ec6a6a;">В</div><div class="abs" style="left:60px;top:336px;width:1393px;height:36px;background:#fffef7"></div><div class="abs" style="left:60px;top:371.1px;width:1393px;height:1.2px;background:#fce6a0;z-index:2"></div><div class="abs" style="left:101.700px;top:349.7px;width:13px;height:13px;border-radius:50%;border:1.400px solid #c9cad7;background:#fff"></div><div class="t " style="left:120.5px;top:346.2px;height:20px;line-height:20px;font-size:13.7px;letter-spacing:0.03px;color:#33343e;">Пофиксить баннер на сайте</div><svg class="abs" style="left:453.800px;top:347.6px;" width="15.400" height="12.900" viewBox="0 0 15 12.600"><use href="#envl"/></svg><div class="t med" style="left:476.4px;top:344.7px;height:20px;line-height:20px;font-size:13.5px;letter-spacing:0.37px;color:#4d5275;">Взаимодействие</div><svg class="abs" style="left:1040px;top:345px;opacity:1" width="18" height="18" viewBox="0 0 18 18"><use href="#avt"/></svg><div class="t " style="left:1067px;top:345.1px;height:20px;line-height:20px;font-size:13.5px;letter-spacing:0px;color:#44454f;">Taiichi O.</div><div class="t " style="left:1238.5px;top:344.9px;height:20px;line-height:20px;font-size:10.3px;letter-spacing:0.2px;color:#a3a4af;">18 июля -</div><div class="abs" style="left:1429.600px;top:344.4px;width:60px;height:19.300px;border-radius:5px;background:#fbedcc"></div><div class="abs" style="left:1436px;top:351.1px;width:6px;height:6px;border-radius:50%;background:#e9a92d"></div><div class="t " style="left:1448.2px;top:344.7px;height:20px;line-height:20px;font-size:10px;letter-spacing:0px;color:#e0a535;">С</div><div class="abs" style="left:60px;top:372px;width:1393px;height:36px;background:#f8fbff"></div><div class="abs" style="left:60px;top:406.8px;width:1393px;height:1.6px;background:#a6cdf8;z-index:2"></div><svg class="abs" style="left:85px;top:388px" width="7" height="9" viewBox="0 0 7 9"><path d="M0.500 0.500 L6.500 4.500 L0.500 8.500 Z" fill="#c4c5cf"/></svg><div class="abs" style="left:101.700px;top:385.7px;width:13px;height:13px;border-radius:50%;border:1.400px solid #c9cad7;background:#fff"></div><div class="t " style="left:120.5px;top:382.2px;height:20px;line-height:20px;font-size:13.7px;letter-spacing:0.07px;color:#33343e;">Разработать дизайн</div><svg class="abs" style="left:451.400px;top:380.8px" width="20.500" height="20" viewBox="0 0 16 16" preserveAspectRatio="none"><use href="#vkus"/></svg><div class="t med" style="left:476.4px;top:380.7px;height:20px;line-height:20px;font-size:13.5px;letter-spacing:0.16px;color:#4d5275;">ВкусВилл</div><svg class="abs" style="left:1040px;top:381px;opacity:1" width="18" height="18" viewBox="0 0 18 18"><use href="#avt"/></svg><svg class="abs" style="left:1055px;top:381px;opacity:1" width="18" height="18" viewBox="0 0 18 18"><use href="#avs"/></svg><div class="t " style="left:1238.5px;top:380.9px;height:20px;line-height:20px;font-size:10.3px;letter-spacing:0.2px;color:#a3a4af;">19 июля</div><div class="abs" style="left:1429.600px;top:380.4px;width:60px;height:19.300px;border-radius:5px;background:#deeefd"></div><div class="abs" style="left:1436px;top:387.1px;width:6px;height:6px;border-radius:50%;background:#5eacf5"></div><div class="t " style="left:1448.2px;top:380.7px;height:20px;line-height:20px;font-size:10px;letter-spacing:0px;color:#62aef2;">З</div><div class="abs" style="left:60px;top:408px;width:1393px;height:36px;background:#fffef7"></div><div class="abs" style="left:60px;top:443.1px;width:1393px;height:1.2px;background:#fce6a0;z-index:2"></div><svg class="abs" style="left:85px;top:424px" width="7" height="9" viewBox="0 0 7 9"><path d="M0.500 0.500 L6.500 4.500 L0.500 8.500 Z" fill="#dddde4"/></svg><svg class="abs" style="left:101.500px;top:421.5px" width="13.500" height="13.500" viewBox="0 0 14 14"><circle cx="7" cy="7" r="7" fill="#9ed9a9"/><path d="M4 7.200 L6.200 9.300 L10 5" fill="none" stroke="#fff" stroke-width="1.500" stroke-linecap="round" stroke-linejoin="round"/></svg><div class="t " style="left:120.5px;top:418.2px;height:20px;line-height:20px;font-size:13.7px;letter-spacing:-0.15000000000000002px;color:#8f8f96;text-decoration:line-through;text-decoration-thickness:1.2px;text-decoration-color:#66666c">Встреча с AGV21</div><svg class="abs" style="left:453.800px;top:419.6px;opacity:.55;" width="15.400" height="12.900" viewBox="0 0 15 12.600"><use href="#envl"/></svg><div class="t med" style="left:476.4px;top:416.7px;height:20px;line-height:20px;font-size:13.5px;letter-spacing:0.37px;color:#a0a2b8;">Взаимодействие</div><svg class="abs" style="left:1040px;top:417px;opacity:0.55" width="18" height="18" viewBox="0 0 18 18"><use href="#avt"/></svg><div class="t " style="left:1067px;top:417.1px;height:20px;line-height:20px;font-size:13.5px;letter-spacing:0px;color:#85868f;">Taiichi O.</div><div class="t " style="left:1238.5px;top:416.9px;height:20px;line-height:20px;font-size:10.3px;letter-spacing:0.2px;color:#a3a4af;">5 апр.</div><div class="abs" style="left:1429.600px;top:416.4px;width:60px;height:19.300px;border-radius:5px;background:#fbedcc"></div><div class="abs" style="left:1436px;top:423.1px;width:6px;height:6px;border-radius:50%;background:#e9a92d"></div><div class="t " style="left:1448.2px;top:416.7px;height:20px;line-height:20px;font-size:10px;letter-spacing:0px;color:#e0a535;">С</div><svg class="abs" style="left:84px;top:495.7px" width="8.600" height="5.800" viewBox="0 0 8.600 5.800"><path d="M0.400 0.400 L8.200 0.400 L4.300 5.500 Z" fill="#c6c7d0" stroke="#c6c7d0" stroke-width="0.500" stroke-linejoin="round"/></svg><svg class="abs" style="left:100px;top:490px;opacity:1" width="16.5" height="16.5" viewBox="0 0 18 18"><use href="#avs"/></svg><div class="t med" style="left:121px;top:488.4px;height:20px;line-height:20px;font-size:14.7px;letter-spacing:0.12px;color:#50515e;">Steve Jobs</div><div class="abs" style="left:60px;top:516px;width:1393px;height:1px;background:#f6f6fa"></div><svg class="abs" style="left:82.300px;top:527.9px" width="14" height="14" viewBox="0 0 15 15" fill="none" stroke="#c9cad4" stroke-width="1.250" stroke-linecap="round"><path d="M9.500 13.200 A6.200 6.200 0 1 1 13.500 9"/><path d="M7.500 4.800 L7.500 10.200 M4.800 7.500 L10.200 7.500"/></svg><div class="t " style="left:104.5px;top:525.1px;height:20px;line-height:20px;font-size:13.4px;letter-spacing:0.08px;color:#a0a1ac;">Новая задача</div><div class="abs" style="left:102px;top:552px;width:1351px;height:1px;background:#f4f4f8"></div><div class="abs" style="left:60px;top:553px;width:1393px;height:36px;background:#fffaf9"></div><div class="abs" style="left:60px;top:588.1px;width:1393px;height:1.2px;background:#f5b0b0;z-index:2"></div><div class="abs" style="left:101.700px;top:566.7px;width:13px;height:13px;border-radius:50%;border:1.400px solid #c9cad7;background:#fff"></div><div class="t " style="left:120.5px;top:563.2px;height:20px;line-height:20px;font-size:13.7px;letter-spacing:0.1px;color:#33343e;">Провести квартальное совещание менеджеров</div><svg class="abs" style="left:453.800px;top:564.6px;" width="15.400" height="12.900" viewBox="0 0 15 12.600"><use href="#envl"/></svg><div class="t med" style="left:476.4px;top:561.7px;height:20px;line-height:20px;font-size:13.5px;letter-spacing:0.37px;color:#4d5275;">Взаимодействие</div><svg class="abs" style="left:1040px;top:562px;opacity:1" width="18" height="18" viewBox="0 0 18 18"><use href="#avt"/></svg><svg class="abs" style="left:1055px;top:562px;opacity:1" width="18" height="18" viewBox="0 0 18 18"><use href="#avs"/></svg><div class="abs" style="left:1070.400px;top:562px;width:18px;height:18px;border-radius:50%;background:#f6f6fb"></div><div class="t " style="left:1075px;top:561.7px;height:20px;line-height:20px;font-size:8.5px;letter-spacing:-0.3px;color:#b0b2c4;">+1</div><div class="t " style="left:1238.5px;top:561.9px;height:20px;line-height:20px;font-size:10.3px;letter-spacing:0.2px;color:#a3a4af;">20 июля</div><div class="abs" style="left:1429.600px;top:561.4px;width:60px;height:19.300px;border-radius:5px;background:#fde1e0"></div><div class="abs" style="left:1436px;top:568.1px;width:6px;height:6px;border-radius:50%;background:#ef6464"></div><div class="t " style="left:1448.2px;top:561.7px;height:20px;line-height:20px;font-size:10px;letter-spacing:0px;color:#ec6a6a;">В</div><div class="abs" style="left:60px;top:589px;width:1393px;height:36px;background:#fffaf9"></div><div class="abs" style="left:60px;top:624.1px;width:1393px;height:1.2px;background:#f5b0b0;z-index:2"></div><div class="abs" style="left:101.700px;top:602.7px;width:13px;height:13px;border-radius:50%;border:1.400px solid #c9cad7;background:#fff"></div><div class="t " style="left:120.5px;top:599.2px;height:20px;line-height:20px;font-size:13.7px;letter-spacing:0.07999999999999999px;color:#33343e;">Подготовить отчёт за I квартал</div><svg class="abs" style="left:453.800px;top:600.6px;" width="15.400" height="12.900" viewBox="0 0 15 12.600"><use href="#envl"/></svg><div class="t med" style="left:476.4px;top:597.7px;height:20px;line-height:20px;font-size:13.5px;letter-spacing:0.37px;color:#4d5275;">Взаимодействие</div><div class="abs" style="left:647.3px;top:597.5px;width:20px;height:20px;border-radius:5px;background:#f5f5fb"></div><div class="t " style="left:653.5999999999999px;top:598.0px;height:20px;line-height:20px;font-size:7.5px;letter-spacing:0.2px;color:#6c6e80;">М</div><div class="t med" style="left:671.9px;top:597.7px;height:20px;line-height:20px;font-size:13.5px;letter-spacing:0.48px;color:#4d5275;">Маркетинг</div><div class="abs" style="left:843.3px;top:597.5px;width:20px;height:20px;border-radius:5px;background:#f5f5fb"></div><div class="t " style="left:846.8999999999999px;top:598.0px;height:20px;line-height:20px;font-size:7.5px;letter-spacing:0.2px;color:#6c6e80;">КР</div><div class="t med" style="left:867.9px;top:597.7px;height:20px;line-height:20px;font-size:13.5px;letter-spacing:0.31px;color:#4d5275;">К работе</div><svg class="abs" style="left:1040px;top:598px;opacity:1" width="18" height="18" viewBox="0 0 18 18"><use href="#avt"/></svg><svg class="abs" style="left:1055px;top:598px;opacity:1" width="18" height="18" viewBox="0 0 18 18"><use href="#avs"/></svg><div class="t " style="left:1238.5px;top:597.9px;height:20px;line-height:20px;font-size:10.3px;letter-spacing:0.2px;color:#a3a4af;">19 июля -</div><div class="abs" style="left:1429.600px;top:597.4px;width:60px;height:19.300px;border-radius:5px;background:#fde1e0"></div><div class="abs" style="left:1436px;top:604.1px;width:6px;height:6px;border-radius:50%;background:#ef6464"></div><div class="t " style="left:1448.2px;top:597.7px;height:20px;line-height:20px;font-size:10px;letter-spacing:0px;color:#ec6a6a;">В</div><div class="abs" style="left:60px;top:625px;width:1393px;height:36px;background:#f8fbff"></div><div class="abs" style="left:60px;top:659.8px;width:1393px;height:1.6px;background:#a6cdf8;z-index:2"></div><svg class="abs" style="left:85px;top:641px" width="7" height="9" viewBox="0 0 7 9"><path d="M0.500 0.500 L6.500 4.500 L0.500 8.500 Z" fill="#c4c5cf"/></svg><div class="abs" style="left:101.700px;top:638.7px;width:13px;height:13px;border-radius:50%;border:1.400px solid #c9cad7;background:#fff"></div><div class="t " style="left:120.5px;top:635.2px;height:20px;line-height:20px;font-size:13.7px;letter-spacing:0.07px;color:#33343e;">Разработать дизайн</div><svg class="abs" style="left:451.400px;top:633.8px" width="20.500" height="20" viewBox="0 0 16 16" preserveAspectRatio="none"><use href="#vkus"/></svg><div class="t med" style="left:476.4px;top:633.7px;height:20px;line-height:20px;font-size:13.5px;letter-spacing:0.16px;color:#4d5275;">ВкусВилл</div><svg class="abs" style="left:1040px;top:634px;opacity:1" width="18" height="18" viewBox="0 0 18 18"><use href="#avt"/></svg><svg class="abs" style="left:1055px;top:634px;opacity:1" width="18" height="18" viewBox="0 0 18 18"><use href="#avs"/></svg><div class="t " style="left:1238.5px;top:633.9px;height:20px;line-height:20px;font-size:10.3px;letter-spacing:0.2px;color:#a3a4af;">19 июля</div><div class="abs" style="left:1429.600px;top:633.4px;width:60px;height:19.300px;border-radius:5px;background:#deeefd"></div><div class="abs" style="left:1436px;top:640.1px;width:6px;height:6px;border-radius:50%;background:#5eacf5"></div><div class="t " style="left:1448.2px;top:633.7px;height:20px;line-height:20px;font-size:10px;letter-spacing:0px;color:#62aef2;">З</div><svg class="abs" style="left:84px;top:712.7px" width="8.600" height="5.800" viewBox="0 0 8.600 5.800"><path d="M0.400 0.400 L8.200 0.400 L4.300 5.500 Z" fill="#c6c7d0" stroke="#c6c7d0" stroke-width="0.500" stroke-linejoin="round"/></svg><svg class="abs" style="left:100px;top:707px;opacity:1" width="16.5" height="16.5" viewBox="0 0 18 18"><use href="#avd"/></svg><div class="t med" style="left:121px;top:705.4px;height:20px;line-height:20px;font-size:14.7px;letter-spacing:0.05px;color:#50515e;">Dylan Field</div><div class="abs" style="left:60px;top:733px;width:1393px;height:1px;background:#f6f6fa"></div><svg class="abs" style="left:82.300px;top:744.9px" width="14" height="14" viewBox="0 0 15 15" fill="none" stroke="#c9cad4" stroke-width="1.250" stroke-linecap="round"><path d="M9.500 13.200 A6.200 6.200 0 1 1 13.500 9"/><path d="M7.500 4.800 L7.500 10.200 M4.800 7.500 L10.200 7.500"/></svg><div class="t " style="left:104.5px;top:742.1px;height:20px;line-height:20px;font-size:13.4px;letter-spacing:0.08px;color:#a0a1ac;">Новая задача</div><div class="abs" style="left:102px;top:769px;width:1351px;height:1px;background:#f4f4f8"></div><div class="abs" style="left:60px;top:770px;width:1393px;height:36px;background:#fffaf9"></div><div class="abs" style="left:60px;top:805.1px;width:1393px;height:1.2px;background:#f5b0b0;z-index:2"></div><div class="abs" style="left:101.700px;top:783.7px;width:13px;height:13px;border-radius:50%;border:1.400px solid #c9cad7;background:#fff"></div><div class="t " style="left:120.5px;top:780.2px;height:20px;line-height:20px;font-size:13.7px;letter-spacing:0.1px;color:#33343e;">Провести квартальное совещание менеджеров</div><svg class="abs" style="left:453.800px;top:781.6px;" width="15.400" height="12.900" viewBox="0 0 15 12.600"><use href="#envl"/></svg><div class="t med" style="left:476.4px;top:778.7px;height:20px;line-height:20px;font-size:13.5px;letter-spacing:0.37px;color:#4d5275;">Взаимодействие</div><svg class="abs" style="left:1040px;top:779px;opacity:1" width="18" height="18" viewBox="0 0 18 18"><use href="#avt"/></svg><svg class="abs" style="left:1055px;top:779px;opacity:1" width="18" height="18" viewBox="0 0 18 18"><use href="#avs"/></svg><div class="abs" style="left:1070.400px;top:779px;width:18px;height:18px;border-radius:50%;background:#f6f6fb"></div><div class="t " style="left:1075px;top:778.7px;height:20px;line-height:20px;font-size:8.5px;letter-spacing:-0.3px;color:#b0b2c4;">+1</div><div class="t " style="left:1238.5px;top:778.9px;height:20px;line-height:20px;font-size:10.3px;letter-spacing:0.2px;color:#a3a4af;">20 июля</div><div class="abs" style="left:1429.600px;top:778.4px;width:60px;height:19.300px;border-radius:5px;background:#fde1e0"></div><div class="abs" style="left:1436px;top:785.1px;width:6px;height:6px;border-radius:50%;background:#ef6464"></div><div class="t " style="left:1448.2px;top:778.7px;height:20px;line-height:20px;font-size:10px;letter-spacing:0px;color:#ec6a6a;">В</div><div class="abs" style="left:60px;top:806px;width:1393px;height:36px;background:#fffaf9"></div><div class="abs" style="left:60px;top:841.1px;width:1393px;height:1.2px;background:#f5b0b0;z-index:2"></div><div class="abs" style="left:101.700px;top:819.7px;width:13px;height:13px;border-radius:50%;border:1.400px solid #c9cad7;background:#fff"></div><div class="t " style="left:120.5px;top:816.2px;height:20px;line-height:20px;font-size:13.7px;letter-spacing:0.06px;color:#33343e;">Разработать дизайн макетов</div><svg class="abs" style="left:451.400px;top:817.4px" width="20.500" height="13.800" viewBox="0 0 16 11.500" preserveAspectRatio="none"><use href="#mvid"/></svg><div class="t med" style="left:476.4px;top:814.7px;height:20px;line-height:20px;font-size:13.5px;letter-spacing:0.22px;color:#4d5275;">МВидео</div><svg class="abs" style="left:1040px;top:815px;opacity:1" width="18" height="18" viewBox="0 0 18 18"><use href="#avt"/></svg><svg class="abs" style="left:1055px;top:815px;opacity:1" width="18" height="18" viewBox="0 0 18 18"><use href="#avd"/></svg><div class="t " style="left:1238.5px;top:814.9px;height:20px;line-height:20px;font-size:10.3px;letter-spacing:0.2px;color:#a3a4af;">20 июля</div><div class="abs" style="left:1429.600px;top:814.4px;width:60px;height:19.300px;border-radius:5px;background:#fde1e0"></div><div class="abs" style="left:1436px;top:821.1px;width:6px;height:6px;border-radius:50%;background:#ef6464"></div><div class="t " style="left:1448.2px;top:814.7px;height:20px;line-height:20px;font-size:10px;letter-spacing:0px;color:#ec6a6a;">В</div>
</div>
<svg class="abs" style="left:1260px;top:110.500px;z-index:50" width="120" height="130" viewBox="0 0 765 829">
<defs>
<radialGradient id="hg" cx="0.55" cy="0.62" r="0.62"><stop offset="0" stop-color="#fcc93e"/><stop offset="0.55" stop-color="#f9bc2c"/><stop offset="0.85" stop-color="#f2a81c"/><stop offset="1" stop-color="#e6930f"/></radialGradient>
<linearGradient id="hf" x1="0" x2="1" y1="0" y2="0"><stop offset="0" stop-color="#f2ab1e"/><stop offset="0.4" stop-color="#fbc437"/><stop offset="0.8" stop-color="#f7b528"/><stop offset="1" stop-color="#e39210"/></linearGradient>
<linearGradient id="hw" x1="0" x2="0" y1="0" y2="1"><stop offset="0" stop-color="#f4ae20" stop-opacity="0"/><stop offset="1" stop-color="#e08c0c" stop-opacity="0.9"/></linearGradient>
</defs>
<path d="M293 150 C293 120 310 105 337 105 C365 105 382 120 382 150 L382 365 C395 348 432 345 452 368 C472 358 512 362 527 386 C562 380 602 400 606 440 C616 480 616 540 600 600 C590 640 580 660 585 692 L603 752 C560 811 380 811 329 757 L345 665 C300 640 260 600 245 540 C235 490 200 430 180 395 C165 365 180 345 210 340 C240 338 270 370 293 410 Z" fill="url(#hg)"/>
<mask id="hm"><linearGradient id="hmg" x1="0" x2="0" y1="0" y2="1"><stop offset="0" stop-color="#fff"/><stop offset="0.6" stop-color="#fff"/><stop offset="1" stop-color="#000"/></linearGradient><rect x="280" y="100" width="120" height="380" fill="url(#hmg)"/></mask>
<path d="M293 150 C293 120 310 105 337 105 C365 105 382 120 382 150 L382 480 L293 480 Z" fill="url(#hf)" mask="url(#hm)"/>
<path d="M345 665 C420 700 520 700 585 692 L603 752 C560 811 380 811 329 757 Z" fill="url(#hw)"/>
<path d="M294 395 C296 430 296 455 300 480" stroke="#e0940f" stroke-width="5" fill="none" opacity="0.600" stroke-linecap="round"/>
<path d="M381 300 L381 372" stroke="#e0940f" stroke-width="4" fill="none" opacity="0.500" stroke-linecap="round"/>
</svg>
<div class="abs" style="left:61px;top:825.700px;width:975px;height:3.300px;background:#c9c9cf;z-index:60"></div><div class="abs" style="left:1036px;top:827px;width:417px;height:2px;background:#c6c6d3;z-index:60"></div>
</div>
<div id="frameborder"></div>
</body>
</html>
